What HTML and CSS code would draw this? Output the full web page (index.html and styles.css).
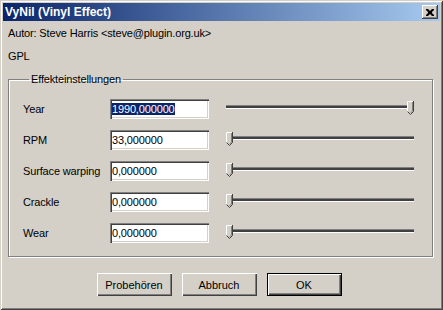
FILE: index.html
```html
<!DOCTYPE html>
<html lang="de">
<head>
    <meta charset="UTF-8">
    <title>VyNil (Vinyl Effect)</title>
    <link rel="stylesheet" href="styles.css">
</head>
<body>
    <div class="window">
        <div class="titlebar">
            <span class="title">VyNil (Vinyl Effect)</span>
            <button class="close-btn" aria-label="Schließen">
                <svg width="8" height="7" viewBox="0 0 8 7">
                    <path d="M0 0h2l2 2 2-2h2v1l-2 2v1l2 2v1h-2l-2-2-2 2h-2v-1l2-2v-1l-2-2z" fill="#000"/>
                </svg>
            </button>
        </div>
        <div class="content">
            <div class="line">Autor: Steve Harris &lt;steve@plugin.org.uk&gt;</div>
            <div class="line">GPL</div>
            <fieldset class="group">
                <legend>Effekteinstellungen</legend>
                <div class="row">
                    <label>Year</label>
                    <div class="field"><span class="selected">1990,000000</span></div>
                    <div class="slider">
                        <div class="track"></div>
                        <svg class="thumb" style="left: 181px" width="7" height="14" viewBox="0 0 7 14">
                            <path d="M0.5 13V0.5H6.5V10L3.5 13" fill="#d4d0c8"/>
                            <path d="M0.5 11V0.5H6" fill="none" stroke="#fff"/>
                            <path d="M6.5 0V10.5L3.5 13.5L0.5 10.5" fill="none" stroke="#404040"/>
                            <path d="M5.5 1V10L3.5 12" fill="none" stroke="#808080"/>
                        </svg>
                    </div>
                </div>
                <div class="row">
                    <label>RPM</label>
                    <div class="field">33,000000</div>
                    <div class="slider">
                        <div class="track"></div>
                        <svg class="thumb" style="left: 0px" width="7" height="14" viewBox="0 0 7 14">
                            <path d="M0.5 13V0.5H6.5V10L3.5 13" fill="#d4d0c8"/>
                            <path d="M0.5 11V0.5H6" fill="none" stroke="#fff"/>
                            <path d="M6.5 0V10.5L3.5 13.5L0.5 10.5" fill="none" stroke="#404040"/>
                            <path d="M5.5 1V10L3.5 12" fill="none" stroke="#808080"/>
                        </svg>
                    </div>
                </div>
                <div class="row">
                    <label>Surface warping</label>
                    <div class="field">0,000000</div>
                    <div class="slider">
                        <div class="track"></div>
                        <svg class="thumb" style="left: 0px" width="7" height="14" viewBox="0 0 7 14">
                            <path d="M0.5 13V0.5H6.5V10L3.5 13" fill="#d4d0c8"/>
                            <path d="M0.5 11V0.5H6" fill="none" stroke="#fff"/>
                            <path d="M6.5 0V10.5L3.5 13.5L0.5 10.5" fill="none" stroke="#404040"/>
                            <path d="M5.5 1V10L3.5 12" fill="none" stroke="#808080"/>
                        </svg>
                    </div>
                </div>
                <div class="row">
                    <label>Crackle</label>
                    <div class="field">0,000000</div>
                    <div class="slider">
                        <div class="track"></div>
                        <svg class="thumb" style="left: 0px" width="7" height="14" viewBox="0 0 7 14">
                            <path d="M0.5 13V0.5H6.5V10L3.5 13" fill="#d4d0c8"/>
                            <path d="M0.5 11V0.5H6" fill="none" stroke="#fff"/>
                            <path d="M6.5 0V10.5L3.5 13.5L0.5 10.5" fill="none" stroke="#404040"/>
                            <path d="M5.5 1V10L3.5 12" fill="none" stroke="#808080"/>
                        </svg>
                    </div>
                </div>
                <div class="row">
                    <label>Wear</label>
                    <div class="field">0,000000</div>
                    <div class="slider">
                        <div class="track"></div>
                        <svg class="thumb" style="left: 0px" width="7" height="14" viewBox="0 0 7 14">
                            <path d="M0.5 13V0.5H6.5V10L3.5 13" fill="#d4d0c8"/>
                            <path d="M0.5 11V0.5H6" fill="none" stroke="#fff"/>
                            <path d="M6.5 0V10.5L3.5 13.5L0.5 10.5" fill="none" stroke="#404040"/>
                            <path d="M5.5 1V10L3.5 12" fill="none" stroke="#808080"/>
                        </svg>
                    </div>
                </div>
            </fieldset>
            <div class="buttons">
                <button class="btn">Probehören</button>
                <button class="btn">Abbruch</button>
                <button class="btn default">OK</button>
            </div>
        </div>
    </div>
</body>
</html>
```
FILE: styles.css
```css
/* Fenster im klassischen Windows-Stil */
body {
    margin: 0;
    background-color: #d4d0c8;
    font-family: "Liberation Sans", Arial, sans-serif;
    font-size: 11px;
    letter-spacing: -0.15px;
    color: #000;
}

.window {
    width: 443px;
    height: 310px;
    box-sizing: border-box;
    padding: 3px;
    background-color: #d4d0c8;
    box-shadow: inset 1px 1px 0 #d4d0c8, inset -1px -1px 0 #404040,
        inset 2px 2px 0 #ffffff, inset -2px -2px 0 #808080;
}

/* Titelleiste */
.titlebar {
    height: 18px;
    display: flex;
    align-items: center;
    justify-content: space-between;
    padding: 0 2px 0 2px;
    background: linear-gradient(to right, #0a246a, #a6caf0);
}

.title {
    color: #fff;
    font-weight: bold;
    font-size: 12px;
    letter-spacing: 0;
}

.close-btn {
    width: 16px;
    height: 14px;
    padding: 0;
    margin: 0;
    border: none;
    background-color: #d4d0c8;
    display: flex;
    align-items: center;
    justify-content: center;
    box-shadow: inset -1px -1px 0 #404040, inset 1px 1px 0 #ffffff,
        inset -2px -2px 0 #808080;
}

.close-btn svg {
    display: block;
}

/* Inhalt */
.content {
    padding: 1px 5px 0 5px;
}

.line {
    height: 23px;
    line-height: 23px;
}

/* Gruppenrahmen */
.group {
    margin: 0;
    padding: 8px 0 13px 14px;
    border: 1px solid #808080;
    box-shadow: inset 1px 1px 0 #ffffff, 1px 1px 0 #ffffff;
    width: 425px;
    box-sizing: border-box;
}

.group legend {
    margin-left: 6px;
    padding: 0 2px;
    line-height: 23px;
}

.row {
    display: flex;
    align-items: center;
    height: 20px;
    margin-bottom: 11px;
}

.row:last-child {
    margin-bottom: 0;
}

.row label {
    width: 87px;
}

/* Eingabefeld, eingesenkt */
.field {
    width: 99px;
    height: 20px;
    box-sizing: border-box;
    padding: 2px 2px;
    line-height: 16px;
    background-color: #fff;
    box-shadow: inset 1px 1px 0 #808080, inset 2px 2px 0 #404040,
        inset -1px -1px 0 #ffffff, inset -2px -2px 0 #d4d0c8;
}

.selected {
    background-color: #0a246a;
    color: #fff;
}

/* Schieberegler */
.slider {
    position: relative;
    width: 188px;
    height: 20px;
    margin-left: 17px;
}

.track {
    margin-top: 6px;
    height: 2px;
    background-color: #404040;
    border-top: 1px solid #808080;
    border-bottom: 1px solid #ffffff;
}

.thumb {
    position: absolute;
    top: 2px;
    display: block;
}

/* Schaltflächen */
.buttons {
    display: flex;
    justify-content: center;
    gap: 10px;
    margin-top: 16px;
    padding-right: 5px;
}

.btn {
    width: 75px;
    height: 23px;
    padding: 0;
    border: none;
    background-color: #d4d0c8;
    font-family: "Liberation Sans", Arial, sans-serif;
    font-size: 11px;
    color: #000;
    box-shadow: inset 1px 1px 0 #ffffff, inset -1px -1px 0 #404040,
        inset -2px -2px 0 #808080;
}

.btn.default {
    box-shadow: inset 0 0 0 1px #000, inset 2px 2px 0 #ffffff,
        inset -2px -2px 0 #404040, inset -3px -3px 0 #808080;
}
```
